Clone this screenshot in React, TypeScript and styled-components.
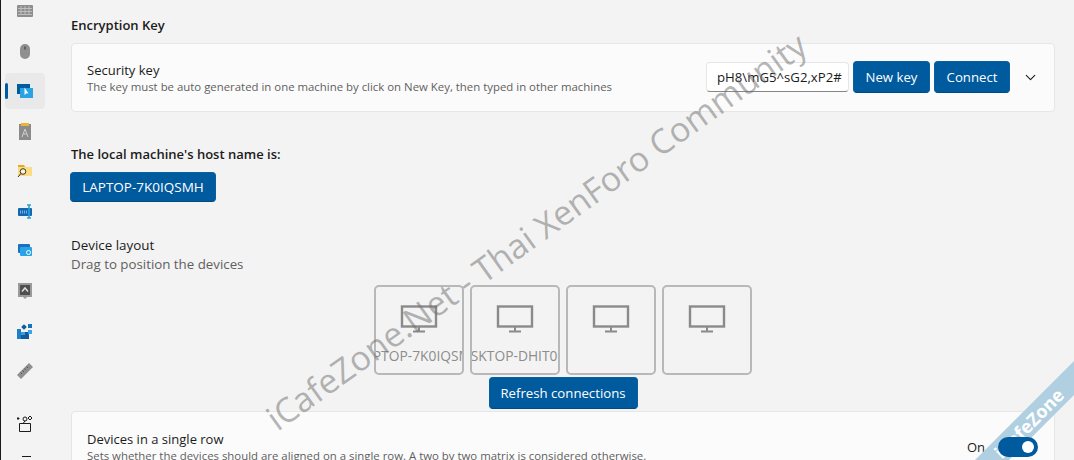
import { ChevronDown } from 'lucide-react';
import styled, { createGlobalStyle } from 'styled-components';

const GlobalStyle = createGlobalStyle`
  html, body {
    margin: 0;
    height: 460px;
    overflow: hidden;
    background: #f3f3f3;
    font-family: "Open Sans", "Liberation Sans", sans-serif;
    color: #1b1b1b;
  }
`;

const Page = styled.div`
  position: relative;
  width: 1074px;
  height: 460px;
  overflow: hidden;
  display: flex;
  border-left: 1px solid #1a1a1a;
  box-sizing: border-box;
`;

const Sidebar = styled.nav`
  width: 70px;
  flex: none;
  margin-top: -9px;
  padding-left: 4px;
  box-sizing: border-box;
  display: flex;
  flex-direction: column;
`;

const NavItem = styled.div<{ $active?: boolean; $gap?: boolean }>`
  position: relative;
  width: 40px;
  height: 36px;
  flex: none;
  margin: ${(p) => (p.$gap ? '14px' : '2px')} 0 2px;
  border-radius: 4px;
  display: flex;
  align-items: center;
  justify-content: center;
  background: ${(p) => (p.$active ? '#e9e9e9' : 'transparent')};

  ${(p) =>
    p.$active &&
    `&::before {
      content: '';
      position: absolute;
      left: 0;
      top: 10px;
      width: 3px;
      height: 16px;
      border-radius: 2px;
      background: #005a9e;
    }`}
`;

const Main = styled.main`
  width: 984px;
  flex: none;
  display: flex;
  flex-direction: column;
`;

const SectionTitle = styled.h2`
  margin: 16px 0 9px;
  font-size: 13px;
  line-height: 18px;
  font-weight: 600;
`;

const Card = styled.section<{ $height: number }>`
  height: ${(p) => p.$height}px;
  flex: none;
  box-sizing: border-box;
  background: #fbfbfb;
  border: 1px solid #e6e6e6;
  border-radius: 4px;
  padding: 0 4px 0 15px;
  display: flex;
  align-items: center;
  justify-content: space-between;
`;

const CardText = styled.div`
  display: flex;
  flex-direction: column;
`;

const CardTitle = styled.div`
  font-size: 13px;
  line-height: 18px;
`;

const CardDesc = styled.div`
  font-size: 11.4px;
  line-height: 16px;
  color: #5f5f5f;
  white-space: nowrap;
`;

const Controls = styled.div`
  display: flex;
  align-items: center;
  gap: 4px;
  margin-top: -1px;
`;

const KeyField = styled.div`
  width: 143px;
  height: 30px;
  box-sizing: border-box;
  background: #fff;
  border: 1px solid #e6e6e6;
  border-bottom-color: #868686;
  border-radius: 4px;
  font-size: 13.2px;
  line-height: 28px;
  padding-left: 10px;
  white-space: nowrap;
  overflow: hidden;
`;

const Button = styled.div<{ $width: number }>`
  width: ${(p) => p.$width}px;
  height: 32px;
  flex: none;
  box-sizing: border-box;
  border-radius: 4px;
  background: #005a9e;
  border: 1px solid #0a5f9f;
  border-bottom-color: #004a83;
  color: #fff;
  font-size: 13.2px;
  display: flex;
  align-items: center;
  justify-content: center;
  white-space: nowrap;
`;

const Expand = styled.div`
  width: 40px;
  margin-left: -4px;
  display: flex;
  justify-content: center;
  color: #1b1b1b;
`;

const HostLabel = styled.div`
  margin: 33px 0 9px;
  font-size: 13px;
  line-height: 18px;
  font-weight: 600;
`;

const HostButton = styled(Button)`
  height: 30px;
  margin-left: -1px;
  font-size: 13.5px;
`;

const LayoutTitle = styled.div`
  margin-top: 34px;
  font-size: 13.4px;
  line-height: 18px;
  font-weight: 500;
`;

const LayoutHint = styled.div`
  font-size: 13.3px;
  line-height: 20px;
  color: #5f5f5f;
`;

const Devices = styled.div`
  margin: 11px 0 2px 1px;
  display: flex;
  justify-content: center;
  gap: 6px;
  padding-right: 1px;
`;

const DeviceBox = styled.div`
  width: 90px;
  height: 90px;
  box-sizing: border-box;
  border: 2px solid #b8b8b8;
  border-radius: 5px;
  padding-top: 18px;
  display: flex;
  flex-direction: column;
  align-items: center;
  overflow: hidden;
`;

const DeviceName = styled.div`
  width: 100%;
  height: 20px;
  margin-top: 13px;
  display: flex;
  justify-content: center;
  overflow: hidden;
  white-space: nowrap;
  font-size: 13.8px;
  line-height: 20px;
  color: #8d8d8d;
`;

const RefreshRow = styled.div`
  display: flex;
  justify-content: center;
  padding-right: 1px;
  margin-left: 1px;
`;

const SingleRowCard = styled(Card)`
  margin-top: 2px;
  align-items: flex-start;
  padding-top: 18px;
  padding-right: 16px;
  overflow: hidden;
`;

const ToggleWrap = styled.div`
  display: flex;
  align-items: center;
  gap: 13px;
  margin-top: 7px;
`;

const ToggleLabel = styled.span`
  font-size: 13px;
`;

const Toggle = styled.div`
  position: relative;
  z-index: 2;
  width: 40px;
  height: 20px;
  border-radius: 10px;
  background: #005a9e;
  display: flex;
  justify-content: flex-end;
  align-items: center;
  padding-right: 4px;
  box-sizing: border-box;
  &::after {
    content: '';
    width: 12px;
    height: 12px;
    border-radius: 50%;
    background: #fff;
  }
`;

const Watermark = styled.div`
  position: absolute;
  left: 205px;
  top: 209px;
  width: 660px;
  text-align: center;
  transform: rotate(-35.6deg);
  font-size: 34px;
  line-height: 44px;
  white-space: nowrap;
  color: rgba(110, 110, 110, 0.5);
  pointer-events: none;
`;

const Ribbon = styled.div`
  position: absolute;
  left: 879px;
  top: 410px;
  width: 300px;
  height: 24px;
  padding-right: 107px;
  box-sizing: border-box;
  transform: rotate(-45deg);
  background: #b0cfe0;
  color: #fff;
  font-size: 18px;
  font-weight: 700;
  line-height: 24px;
  display: flex;
  justify-content: flex-end;
`;

const MonitorIcon = () => (
  <svg width="38" height="28" viewBox="0 0 38 28" fill="none" stroke="#8a8a8a">
    <rect x="2" y="1.5" width="34" height="20" strokeWidth="2.4" />
    <path d="M19 22v4M13 26.5h12" strokeWidth="2" />
  </svg>
);

const KeyboardIcon = () => (
  <svg width="16" height="12" viewBox="0 0 16 12">
    <rect width="16" height="12" rx="1" fill="#8e8e8e" />
    <path d="M1 3.500h14M1 6.500h14M1 9.500h14M4 1v8M8 1v8M12 1v8" stroke="#c9c9c9" strokeWidth="0.8" />
  </svg>
);

const MouseIcon = () => (
  <svg width="10" height="15" viewBox="0 0 10 15">
    <rect width="10" height="15" rx="5" fill="#8f8f8f" />
    <rect x="4" y="2.500" width="2" height="3" fill="#5f5f5f" />
  </svg>
);

const BordersIcon = () => (
  <svg width="16" height="14" viewBox="0 0 16 14">
    <rect width="13" height="10" fill="#005a9e" />
    <rect x="3" y="4" width="13" height="10" fill="#29a3e3" />
    <path d="M7.500 3.500v7.500l2-1.800 2 .3z" fill="#fff" />
  </svg>
);

const ClipboardIcon = () => (
  <svg width="13" height="17" viewBox="0 0 13 17">
    <rect y="1" width="12" height="16" fill="#8b8b8b" />
    <rect x="2" width="8" height="3" fill="#f1b233" />
    <path d="M3 14 6 6l3 8M4.200 11h3.600" stroke="#cfcfcf" fill="none" />
  </svg>
);

const FolderSearchIcon = () => (
  <svg width="16" height="14" viewBox="0 0 16 14">
    <path d="M1 1h6l1 2h7v9H1z" fill="#fbdc83" />
    <path d="M1 1h6l1 2H1z" fill="#e9a91f" />
    <circle cx="6" cy="7.500" r="2.800" fill="#fdf2cc" stroke="#333" />
    <path d="M4 9.500 1 13" stroke="#333" />
  </svg>
);

const RenameIcon = () => (
  <svg width="15" height="15" viewBox="0 0 15 15">
    <rect y="4" width="14" height="8" rx="1" fill="#1468ae" />
    <path d="M2 8h7" stroke="#6fb4e6" strokeDasharray="1 1" strokeWidth="3" />
    <path d="M11 1v13M9 1h4M9 14h4" stroke="#2aa3e0" strokeWidth="1.600" />
  </svg>
);

const WindowsIcon = () => (
  <svg width="15" height="14" viewBox="0 0 15 14">
    <rect width="12" height="9" rx="1" fill="#1872bd" />
    <rect x="2" y="3" width="12" height="9" rx="1" fill="#2aa3e8" />
    <circle cx="10.500" cy="8.500" r="2" fill="none" stroke="#fff" />
  </svg>
);

const PeekIcon = () => (
  <svg width="14" height="16" viewBox="0 0 14 16">
    <rect width="14" height="14" fill="#9a9a9a" />
    <rect x="2" y="2" width="10" height="10" fill="#4f4f4f" />
    <path d="M4 8.500 7 5l3 3.500" stroke="#ddd" strokeWidth="1.500" fill="none" />
    <path d="M5 14h4l-2 2z" fill="#9a9a9a" />
  </svg>
);

const PowerToysIcon = () => (
  <svg width="16" height="16" viewBox="0 0 16 16">
    <path d="M0 6h4v10H0z" fill="#1b80c9" />
    <path d="M4 9h8v7H4z" fill="#0f5c9e" />
    <path d="M4 9h4v3H4z" fill="#3e9cdc" />
    <rect x="5" y="2" width="4" height="4" transform="rotate(45 7 4)" fill="#0f5c9e" />
    <rect x="11" y="1" width="4" height="4" fill="#1573bd" />
    <rect x="11" y="7" width="4" height="4" fill="#38a7ea" />
  </svg>
);

const RulerIcon = () => (
  <svg width="16" height="16" viewBox="0 0 16 16">
    <path d="M12 0 16 4 4 16 0 12z" fill="#8f8f8f" />
    <path d="M3.500 9.500l1.500 1.500M5.500 7.500l1.500 1.500M7.500 5.500l1.500 1.500M9.500 3.500l1.500 1.500" stroke="#555" />
  </svg>
);

const GiftIcon = () => (
  <svg width="16" height="17" viewBox="0 0 16 17" fill="none" stroke="#1b1b1b">
    <path d="M2.500 8.500h11v8h-11z" />
    <circle cx="8" cy="4" r="2" />
    <path d="M8 6 6 8.500M1 2v3M-.5 3.500h3M13 1l2 2-2 2-2-2z" />
  </svg>
);

const ListIcon = () => (
  <svg width="16" height="16" viewBox="0 0 16 16" fill="none" stroke="#1b1b1b">
    <path d="M5 1.500h9M2 6.500h8" />
  </svg>
);

function App() {
  return (
    <Page>
      <GlobalStyle />
      <Sidebar>
        <NavItem><KeyboardIcon /></NavItem>
        <NavItem><MouseIcon /></NavItem>
        <NavItem $active><BordersIcon /></NavItem>
        <NavItem><ClipboardIcon /></NavItem>
        <NavItem><FolderSearchIcon /></NavItem>
        <NavItem><RenameIcon /></NavItem>
        <NavItem><WindowsIcon /></NavItem>
        <NavItem><PeekIcon /></NavItem>
        <NavItem><PowerToysIcon /></NavItem>
        <NavItem><RulerIcon /></NavItem>
        <NavItem $gap><GiftIcon /></NavItem>
        <NavItem><ListIcon /></NavItem>
      </Sidebar>
      <Main>
        <SectionTitle>Encryption Key</SectionTitle>
        <Card $height={69}>
          <CardText>
            <CardTitle>Security key</CardTitle>
            <CardDesc>The key must be auto generated in one machine by click on New Key, then typed in other machines</CardDesc>
          </CardText>
          <Controls>
            <KeyField>pH8\mG5^sG2,xP2#</KeyField>
            <Button $width={77}>New key</Button>
            <Button $width={76}>Connect</Button>
            <Expand><ChevronDown size={17} strokeWidth={1.5} /></Expand>
          </Controls>
        </Card>
        <HostLabel>The local machine's host name is:</HostLabel>
        <HostButton $width={146}>LAPTOP-7K0IQSMH</HostButton>
        <LayoutTitle>Device layout</LayoutTitle>
        <LayoutHint>Drag to position the devices</LayoutHint>
        <Devices>
          <DeviceBox><MonitorIcon /><DeviceName>LAPTOP-7K0IQSMH</DeviceName></DeviceBox>
          <DeviceBox><MonitorIcon /><DeviceName>DESKTOP-DHIT0QA</DeviceName></DeviceBox>
          <DeviceBox><MonitorIcon /></DeviceBox>
          <DeviceBox><MonitorIcon /></DeviceBox>
        </Devices>
        <RefreshRow><Button $width={149}>Refresh connections</Button></RefreshRow>
        <SingleRowCard $height={60}>
          <CardText>
            <CardTitle>Devices in a single row</CardTitle>
            <CardDesc>Sets whether the devices should are aligned on a single row. A two by two matrix is considered otherwise.</CardDesc>
          </CardText>
          <ToggleWrap>
            <ToggleLabel>On</ToggleLabel>
            <Toggle />
          </ToggleWrap>
        </SingleRowCard>
      </Main>
      <Watermark>iCafeZone.Net - Thai XenForo Community</Watermark>
      <Ribbon>iCafeZone</Ribbon>
    </Page>
  );
}

export default App;
